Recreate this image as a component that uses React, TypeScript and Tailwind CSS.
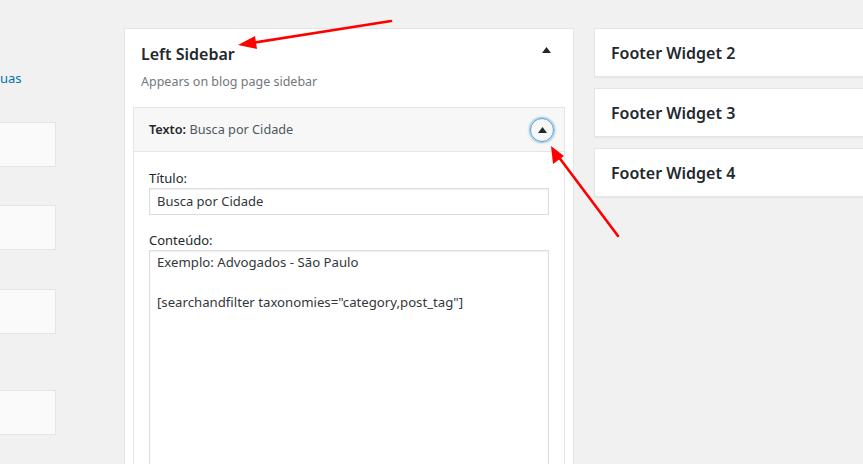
import React from 'react';

const font = { fontFamily: '"Noto Sans", "Liberation Sans", sans-serif' };

function Caret({ className = '' }: { className?: string }) {
  return (
    <svg className={className} width="9" height="6" viewBox="0 0 9 6">
      <path d="M0 6 L4.5 0 L9 6 Z" fill="#23282d" />
    </svg>
  );
}

function FooterBox({ title }: { title: string }) {
  return (
    <div className="h-[49px] bg-white border border-[#e5e5e5] shadow-[0_1px_1px_rgba(0,0,0,0.04)] flex items-center pl-4">
      <h3 className="text-[16px] font-semibold text-[#23282d]">{title}</h3>
    </div>
  );
}

export default function App() {
  return (
    <div className="relative h-[464px] w-[863px] overflow-hidden bg-[#f1f1f1] flex" style={font}>
      {/* Left column, cut off */}
      <div className="w-[56px] shrink-0 flex flex-col">
        <p className="mt-[69px] text-[13px] leading-[18px] text-[#0073aa]">uas</p>
        <div className="mt-[35px] h-[45px] bg-[#fafafa] border border-[#e5e5e5] border-l-0" />
        <div className="mt-[38px] h-[45px] bg-[#fafafa] border border-[#e5e5e5] border-l-0" />
        <div className="mt-[39px] h-[45px] bg-[#fafafa] border border-[#e5e5e5] border-l-0" />
        <div className="mt-[56px] h-[45px] bg-[#fafafa] border border-[#e5e5e5] border-l-0" />
      </div>

      {/* Middle sidebar panel */}
      <div className="ml-[68px] mt-[28px] w-[450px] shrink-0 bg-white border border-[#e5e5e5] self-start h-[500px]">
        <div className="flex items-start justify-between pl-4 pr-[22px] pt-[14px]">
          <h2 className="text-[16px] font-semibold text-[#23282d] leading-[22px]">Left Sidebar</h2>
          <Caret className="mt-[4px]" />
        </div>
        <p className="pl-4 mt-[8px] text-[12.5px] leading-[18px] text-[#72777c]">Appears on blog page sidebar</p>

        <div className="mx-2 mt-[16px] border border-[#e5e5e5]">
          <div className="h-[44px] bg-[#f7f7f7] border-b border-[#e5e5e5] flex items-center justify-between pl-[15px] pr-[10px]">
            <span className="text-[12.7px] text-[#23282d]">
              <span className="font-semibold">Texto:</span> <span className="text-[#50575e]">Busca por Cidade</span>
            </span>
            <div className="w-[24px] h-[24px] rounded-full border border-[#5b9dd9] shadow-[0_0_2px_1px_rgba(30,140,190,0.5)] flex items-center justify-center">
              <Caret />
            </div>
          </div>
          <div className="px-[15px] pt-[17px]">
            <label className="block text-[13px] leading-[18px] text-[#23282d]">Título:</label>
            <div className="mt-[1px] h-[27px] w-[400px] border border-[#ddd] shadow-[inset_0_1px_2px_rgba(0,0,0,0.07)] flex items-center px-[7px] text-[13px] text-[#32373c]">
              Busca por Cidade
            </div>
            <label className="block mt-[16px] text-[13px] leading-[18px] text-[#23282d]">Conteúdo:</label>
            <div className="mt-[1px] h-[300px] w-[400px] border border-[#ddd] shadow-[inset_0_1px_2px_rgba(0,0,0,0.07)] px-[7px] pt-[1px] text-[13.2px] leading-[20px] text-[#32373c]">
              <p>Exemplo: Advogados - São Paulo</p>
              <p className="mt-[20px]">[searchandfilter taxonomies="category,post_tag"]</p>
            </div>
          </div>
        </div>
      </div>

      {/* Right column */}
      <div className="ml-[20px] mt-[28px] flex-1 flex flex-col gap-[11px] -mr-2">
        <FooterBox title="Footer Widget 2" />
        <FooterBox title="Footer Widget 3" />
        <FooterBox title="Footer Widget 4" />
      </div>

      {/* Red annotation arrows */}
      <svg className="absolute inset-0 pointer-events-none" width="863" height="464" viewBox="0 0 863 464">
        <line x1="391" y1="21" x2="252" y2="43" stroke="#f00" strokeWidth="2.6" strokeLinecap="round" />
        <path d="M238 45 L255 36 L257 49 Z" fill="#f00" />
        <line x1="618" y1="236" x2="558" y2="156" stroke="#f00" strokeWidth="2.6" strokeLinecap="round" />
        <path d="M551 146 L553 164 L564 156 Z" fill="#f00" />
      </svg>
    </div>
  );
}
